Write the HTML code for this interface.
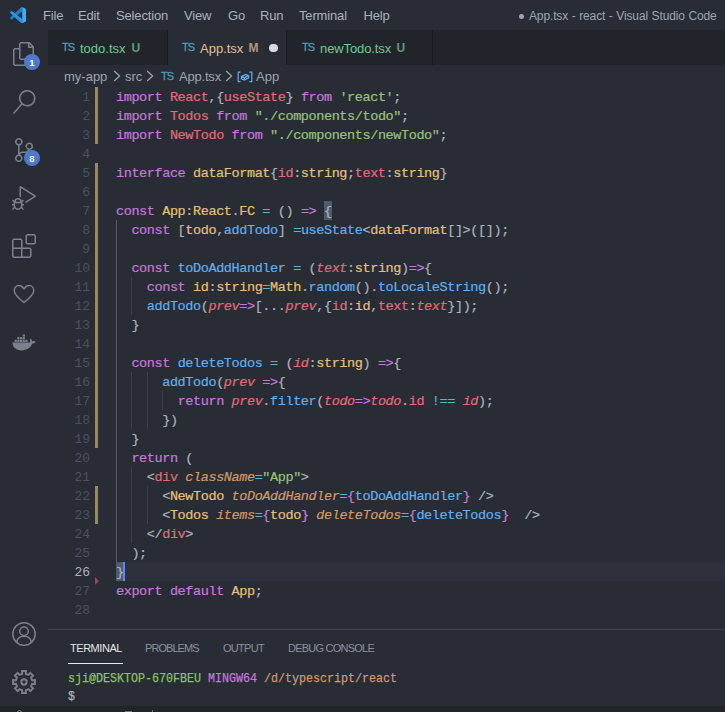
<!DOCTYPE html>
<html><head><meta charset="utf-8"><title>App.tsx - react - Visual Studio Code</title>
<style>
*{box-sizing:border-box;margin:0;padding:0}
html,body{width:725px;height:712px;overflow:hidden;background:#282c34}
body{position:relative;font-family:"Liberation Sans",sans-serif;color:#abb2bf}
.abs{position:absolute}
#title{left:0;top:0;width:725px;height:30px;background:#282c34}
.menu{position:absolute;top:1px;height:30px;line-height:30px;font-size:13px;letter-spacing:-0.15px;color:#abb2bf;white-space:nowrap}
#wtitle{position:absolute;top:1px;left:529px;height:30px;line-height:30px;font-size:12px;letter-spacing:-0.13px;word-spacing:0.4px;color:#9da5b4;white-space:nowrap}
#act{left:0;top:30px;width:48px;height:676px;background:#282c34}
.badge{position:absolute;width:16px;height:16px;border-radius:8px;background:#4d78cc;color:#fff;font-size:9.5px;font-weight:bold;line-height:17.6px;text-align:center}
#tabs{left:48px;top:30px;width:677px;height:35px;background:#21252b}
.tab{position:absolute;top:0;height:35px;background:#21252b;border-right:1px solid #181a1f;font-size:13px;line-height:35px;white-space:nowrap}
.tab.active{background:#282c34}
.ts{position:absolute;top:0px;font-size:11px;color:#519aba;letter-spacing:-1px;-webkit-text-stroke:0.3px #519aba}
.tab .nm{position:absolute;top:1px}
.tab .st{font-size:12px;font-weight:bold;opacity:.72}
#crumbs{left:48px;top:65px;width:677px;height:22px;background:#282c34;font-size:13px;line-height:22px;color:#9da5b4;white-space:nowrap}
#crumbs span{position:absolute;top:1px}
#editor{left:48px;top:87px;width:677px;height:542px;background:#282c34;overflow:hidden}
.ln{position:absolute;left:0;width:42px;padding-top:1px;text-align:right;height:19px;line-height:19px;font-family:"Liberation Mono",monospace;font-size:13px;letter-spacing:-0.1px;color:#495162}
.ln.cur{color:#abb2bf}
.cl{position:absolute;left:68px;height:19px;line-height:19px;padding-top:1px;font-family:"Liberation Mono",monospace;font-size:13.5px;letter-spacing:-0.4px;-webkit-text-stroke:0.2px currentColor;white-space:pre;color:#abb2bf}
.bm{background:#515a6b;padding:2.9px 0 1px 0}
.k{color:#c678dd}.r{color:#e06c75}.g{color:#98c379}.y{color:#e5c07b}.b{color:#61afef}.c{color:#56b6c2}.o{color:#d19a66}.i{font-style:italic}
.gm{position:absolute;left:47px;width:3px;background:#948b60}
.ig{position:absolute;width:1px;background:#3b4048}
#panel{left:48px;top:629px;width:677px;height:77px;background:#282c34;border-top:1px solid #3e4452}
.pt{position:absolute;top:9px;height:19px;line-height:19px;font-size:11px;color:#8b929e;white-space:nowrap}
.term{position:absolute;left:20px;transform:scaleX(0.8642);transform-origin:0 0;font-family:"Liberation Mono",monospace;font-size:13.5px;letter-spacing:0;-webkit-text-stroke:0.25px currentColor;line-height:17px;white-space:pre;color:#abb2bf}
#status{left:0;top:706px;width:725px;height:6px;background:#21252b}
</style></head><body>
<div id="title" class="abs">
<svg class="abs" style="left:9.5px;top:6.7px" width="16.3" height="16.4" viewBox="0 0 100 100" preserveAspectRatio="none"><path fill="#1f7fc6" d="M1.32 63.59 L16.21 50 L29.33 38.04 L68.76 2.09 C70.63 0.21 73.47 -0.27 75.86 0.88 L75.01 27.3 L45.11 50 L29.33 61.96 L12.16 74.99 C10.56 76.21 8.32 76.11 6.84 74.76 L1.33 69.75 C-0.49 68.1 -0.49 65.24 1.32 63.59Z"/><path fill="#2496e6" d="M1.33 30.25 L6.84 25.24 C8.32 23.89 10.56 23.79 12.16 25.01 L29.33 38.04 L45.11 50 L75.01 72.7 L75.86 99.12 C73.47 100.27 70.63 99.79 68.76 97.91 L29.33 61.96 L16.21 50 L1.32 36.41 C-0.49 34.76 -0.49 31.9 1.33 30.25Z"/><path fill="#3dacf8" d="M75.01 0.6 L75.86 0.88 L96.46 10.8 C98.62 11.83 100 14.02 100 16.42 V83.58 C100 85.98 98.62 88.17 96.45 89.21 L75.86 99.12 L75.01 99.4 Z"/></svg>
<span class="menu" style="left:43px">File</span>
<span class="menu" style="left:78px">Edit</span>
<span class="menu" style="left:116px">Selection</span>
<span class="menu" style="left:184px">View</span>
<span class="menu" style="left:228px">Go</span>
<span class="menu" style="left:260px">Run</span>
<span class="menu" style="left:299px">Terminal</span>
<span class="menu" style="left:363.5px">Help</span>
<span class="abs" style="left:519px;top:14px;width:5px;height:5px;border-radius:3px;background:#9da5b4"></span><span id="wtitle">App.tsx - react - Visual Studio Code</span>
</div>
<div id="act" class="abs">
<svg class="abs ic" style="left:12px;top:12px" width="24" height="24" viewBox="0 0 24 24"><path fill="#7b818c" d="M17.5 0h-9L7 1.5V6H2.5L1 7.5v15.07L2.5 24h12.07L16 22.57V18h4.7l1.3-1.43V4.5L17.5 0zm0 2.12l2.38 2.38H17.5V2.12zm-3 20.38h-12v-15H7v9.07L8.5 18h6v4.5zm6-6h-12v-15H16V6h4.5v10.5z"/></svg>
<div class="badge" style="left:24px;top:24px">1</div>
<svg class="abs ic" style="left:12px;top:60px" width="24" height="24" viewBox="0 0 24 24"><path fill="#7b818c" d="M15.25 0a8.25 8.25 0 0 0-6.18 13.72L1 22.88l1.12 1 8.05-9.12A8.251 8.251 0 1 0 15.25.01V0zm0 15a6.75 6.75 0 1 1 0-13.5 6.75 6.75 0 0 1 0 13.5z"/></svg>
<svg class="abs ic" style="left:12px;top:108px" width="24" height="24" viewBox="0 0 24 24"><path fill="#7b818c" d="M21.007 8.222A3.738 3.738 0 0 0 15.045 5.2a3.737 3.737 0 0 0 1.156 6.583 2.988 2.988 0 0 1-2.668 1.67h-2.99a4.456 4.456 0 0 0-2.989 1.165V7.4a3.737 3.737 0 1 0-1.494 0v9.117a3.776 3.776 0 1 0 1.816.099 2.99 2.99 0 0 1 2.668-1.667h2.99a4.484 4.484 0 0 0 4.223-3.039 3.736 3.736 0 0 0 3.25-3.687zM4.565 3.738a2.242 2.242 0 1 1 4.484 0 2.242 2.242 0 0 1-4.484 0zm4.484 16.441a2.242 2.242 0 1 1-4.484 0 2.242 2.242 0 0 1 4.484 0zm8.221-9.715a2.242 2.242 0 1 1 0-4.485 2.242 2.242 0 0 1 0 4.485z"/></svg>
<div class="badge" style="left:24px;top:120px">8</div>
<svg class="abs ic" style="left:12px;top:156px" width="24" height="24" viewBox="0 0 24 24"><path fill="#7b818c" d="M10.94 13.5l-1.32 1.32a3.73 3.73 0 0 0-7.24 0L1.06 13.5 0 14.56l1.72 1.72-.22.22V18H0v1.5h1.5v.08c.077.489.214.966.41 1.42L0 22.94 1.06 24l1.65-1.65A4.308 4.308 0 0 0 6 24a4.31 4.31 0 0 0 3.29-1.65L10.94 24 12 22.94 10.09 21c.198-.464.336-.951.41-1.45v-.1H12V18h-1.5v-1.5l-.22-.22L12 14.56l-1.06-1.06zM6 13.5a2.25 2.25 0 0 1 2.25 2.25h-4.5A2.25 2.25 0 0 1 6 13.5zm3 6a3.33 3.33 0 0 1-3 3 3.33 3.33 0 0 1-3-3v-2.25h6v2.25zm14.76-9.9v1.26L13.5 17.37V15.6l8.5-5.37L9 2v9.46a5.07 5.07 0 0 0-1.5-.72V.63L8.64 0l15.12 9.6z"/></svg>
<svg class="abs ic" style="left:12px;top:204px" width="24" height="24" viewBox="0 0 24 24"><path fill="#7b818c" d="M13.5 1.5L15 0h7.5L24 1.5V9l-1.5 1.5H15L13.5 9V1.5zm1.5 0V9h7.5V1.5H15zM0 15V6l1.5-1.5H9L10.5 6v7.5H18l1.5 1.5v7.5L18 24H1.5L0 22.5V15zm9-1.5V6H1.5v7.5H9zM9 15H1.5v7.5H9V15zm1.5 7.5H18V15h-7.5v7.5z"/></svg>
<svg class="abs ic" style="left:12px;top:252px" width="24" height="24" viewBox="0 0 24 24"><path fill="none" stroke="#7b818c" stroke-width="1.5" stroke-linejoin="round" d="M12 20.5 C5 15 2.2 11.8 2.2 8.4 C2.2 5.6 4.3 3.6 6.9 3.6 C9 3.6 10.9 4.9 12 7 C13.1 4.9 15 3.6 17.1 3.6 C19.7 3.6 21.8 5.6 21.8 8.4 C21.8 11.8 19 15 12 20.5Z"/></svg>
<svg class="abs ic" style="left:12px;top:301px" width="24" height="24" viewBox="0 0 24 24"><g fill="#7b818c"><path d="M0.4 11.6 H17.6 C18.2 10.6 18.3 9.3 17.9 8.2 L18.4 7.6 C19.4 8.3 20 9.3 20.1 10.3 C21.2 9.9 22.6 10 23.6 10.7 C22.9 12 21.6 12.7 20.2 12.6 C18.6 16.9 15 19.4 9.6 19.4 C4.3 19.4 0.6 16.6 0.4 11.6Z"/><rect x="2.6" y="8.8" width="2.2" height="2.2"/><rect x="5.3" y="8.8" width="2.2" height="2.2"/><rect x="8" y="8.8" width="2.2" height="2.2"/><rect x="10.7" y="8.8" width="2.2" height="2.2"/><rect x="13.4" y="8.8" width="2.2" height="2.2"/><rect x="5.3" y="6.1" width="2.2" height="2.2"/><rect x="8" y="6.1" width="2.2" height="2.2"/><rect x="10.7" y="6.1" width="2.2" height="2.2"/><rect x="10.7" y="3.4" width="2.2" height="2.2"/></g></svg>
<svg class="abs ic" style="left:12px;top:592px" width="24" height="24" viewBox="0 0 24 24"><g fill="none" stroke="#7b818c" stroke-width="1.5"><circle cx="12" cy="12" r="11.2"/><circle cx="12" cy="9.3" r="4.3"/><path d="M4.6 20.2 C5.3 16.3 8.3 14.3 12 14.3 C15.7 14.3 18.7 16.3 19.4 20.2"/></g></svg>
<svg class="abs ic" style="left:12px;top:640px" width="24" height="24" viewBox="0 0 24 24"><g fill="none" stroke="#7b818c" stroke-width="1.9" stroke-linejoin="miter"><path d="M10.19 3.90 L10.09 1.07 L13.91 1.07 L13.81 3.90 L16.45 4.99 L18.38 2.92 L21.08 5.62 L19.01 7.55 L20.10 10.19 L22.93 10.09 L22.93 13.91 L20.10 13.81 L19.01 16.45 L21.08 18.38 L18.38 21.08 L16.45 19.01 L13.81 20.10 L13.91 22.93 L10.09 22.93 L10.19 20.10 L7.55 19.01 L5.62 21.08 L2.92 18.38 L4.99 16.45 L3.90 13.81 L1.07 13.91 L1.07 10.09 L3.90 10.19 L4.99 7.55 L2.92 5.62 L5.62 2.92 L7.55 4.99Z"/><circle cx="12" cy="12" r="2.7"/></g></svg>
</div>
<div id="tabs" class="abs">
 <div class="tab" style="left:0;width:120px"><span class="ts" style="left:14px">TS</span><span class="nm" style="left:32px;color:#73c991">todo.tsx</span><span class="nm st" style="left:83.5px;color:#73c991">U</span></div>
 <div class="tab active" style="left:120px;width:119px"><span class="ts" style="left:14px">TS</span><span class="nm" style="left:32px;color:#e2c08d">App.tsx</span><span class="nm st" style="left:80.5px;color:#e2c08d">M</span><span class="abs" style="left:101.1px;top:13.8px;width:8.6px;height:8.6px;border-radius:5px;background:#d7dae0"></span></div>
 <div class="tab" style="left:239px;width:146px"><span class="ts" style="left:15px">TS</span><span class="nm" style="left:33px;color:#73c991;letter-spacing:-0.1px">newTodo.tsx</span><span class="nm st" style="left:109.5px;color:#73c991">U</span></div>
</div>
<div id="crumbs" class="abs">
 <span style="left:16px">my-app</span><svg class="abs" style="left:65px;top:5px" width="8" height="12" viewBox="0 0 8 12"><path d="M1.2 1 L6.6 6 L1.2 11" fill="none" stroke="#9da5b4" stroke-width="1.2"/></svg><span style="left:77px">src</span><svg class="abs" style="left:98px;top:5px" width="8" height="12" viewBox="0 0 8 12"><path d="M1.2 1 L6.6 6 L1.2 11" fill="none" stroke="#9da5b4" stroke-width="1.2"/></svg><span class="ts" style="left:113px;top:0px">TS</span><span style="left:131px;letter-spacing:-0.2px">App.tsx</span><svg class="abs" style="left:177px;top:5px" width="8" height="12" viewBox="0 0 8 12"><path d="M1.2 1 L6.6 6 L1.2 11" fill="none" stroke="#9da5b4" stroke-width="1.2"/></svg>
 <svg class="abs" style="left:189px;top:6px" width="16" height="12" viewBox="0 0 16 12"><g fill="none" stroke="#61afef" stroke-width="1.2"><path d="M3.6 1.2 H1.2 V10.6 H3.6"/><path d="M12.4 1.2 H14.8 V10.6 H12.4"/><path d="M4.4 5.6 L8.6 3.4 L11.6 4.6 L11.6 6.8 L7.4 9 L4.4 7.8 Z M4.4 5.6 L7.4 6.8 L11.6 4.6 M7.4 6.8 V9"/></g></svg>
 <span style="left:208px">App</span>
</div>
<div id="editor" class="abs">
<div class="abs" style="left:68px;top:475px;width:609px;height:19px;background:#2c313c"></div>
<div class="gm" style="top:0px;height:57px"></div>
<div class="gm" style="top:76px;height:285px"></div>
<div class="gm" style="top:399px;height:38px"></div>
<div class="abs" style="left:47px;top:490px;width:0;height:0;border-top:4px solid transparent;border-bottom:4px solid transparent;border-left:4.4px solid #a83e48"></div>
<div class="ig" style="left:68.0px;top:133px;height:342px;background:#535a69"></div>
<div class="ig" style="left:83.4px;top:190px;height:38px;background:#3b4048"></div>
<div class="ig" style="left:83.4px;top:285px;height:57px;background:#3b4048"></div>
<div class="ig" style="left:83.4px;top:380px;height:76px;background:#3b4048"></div>
<div class="ig" style="left:98.8px;top:285px;height:57px;background:#3b4048"></div>
<div class="ig" style="left:98.8px;top:399px;height:38px;background:#3b4048"></div>
<div class="ig" style="left:114.2px;top:304px;height:19px;background:#3b4048"></div>
<div class="ln" style="top:0px">1</div>
<div class="cl" style="top:0px"><span class="k">import</span> <span class="r">React</span>,{<span class="r">useState</span>} <span class="k">from</span> <span class="g">'react'</span>;</div>
<div class="ln" style="top:19px">2</div>
<div class="cl" style="top:19px"><span class="k">import</span> <span class="r">Todos</span> <span class="k">from</span> <span class="g">"./components/todo"</span>;</div>
<div class="ln" style="top:38px">3</div>
<div class="cl" style="top:38px"><span class="k">import</span> <span class="r">NewTodo</span> <span class="k">from</span> <span class="g">"./components/newTodo"</span>;</div>
<div class="ln" style="top:57px">4</div>
<div class="ln" style="top:76px">5</div>
<div class="cl" style="top:76px"><span class="k">interface</span> <span class="y">dataFormat</span>{<span class="r">id</span>:<span class="y">string</span>;<span class="r">text</span>:<span class="y">string</span>}</div>
<div class="ln" style="top:95px">6</div>
<div class="ln" style="top:114px">7</div>
<div class="cl" style="top:114px"><span class="k">const</span> <span class="y">App</span>:<span class="y">React</span>.<span class="y">FC</span> <span class="c">=</span> () <span class="k">=&gt;</span> <span class="bm">{</span></div>
<div class="ln" style="top:133px">8</div>
<div class="cl" style="top:133px">  <span class="k">const</span> [<span class="y">todo</span>,<span class="b">addTodo</span>] <span class="c">=</span><span class="b">useState</span>&lt;<span class="y">dataFormat</span>[]&gt;([]);</div>
<div class="ln" style="top:152px">9</div>
<div class="ln" style="top:171px">10</div>
<div class="cl" style="top:171px">  <span class="k">const</span> <span class="b">toDoAddHandler</span> <span class="c">=</span> (<span class="r i">text</span>:<span class="y">string</span>)<span class="k">=&gt;</span>{</div>
<div class="ln" style="top:190px">11</div>
<div class="cl" style="top:190px">    <span class="k">const</span> <span class="y">id</span>:<span class="y">string</span><span class="c">=</span><span class="y">Math</span>.<span class="b">random</span>().<span class="b">toLocaleString</span>();</div>
<div class="ln" style="top:209px">12</div>
<div class="cl" style="top:209px">    <span class="b">addTodo</span>(<span class="r i">prev</span><span class="k">=&gt;</span>[...<span class="r i">prev</span>,{<span class="r">id</span>:<span class="y">id</span>,<span class="r">text</span>:<span class="r i">text</span>}]);</div>
<div class="ln" style="top:228px">13</div>
<div class="cl" style="top:228px">  }</div>
<div class="ln" style="top:247px">14</div>
<div class="ln" style="top:266px">15</div>
<div class="cl" style="top:266px">  <span class="k">const</span> <span class="b">deleteTodos</span> <span class="c">=</span> (<span class="r i">id</span>:<span class="y">string</span>) <span class="k">=&gt;</span>{</div>
<div class="ln" style="top:285px">16</div>
<div class="cl" style="top:285px">      <span class="b">addTodo</span>(<span class="r i">prev</span> <span class="k">=&gt;</span>{</div>
<div class="ln" style="top:304px">17</div>
<div class="cl" style="top:304px">        <span class="k">return</span> <span class="r i">prev</span>.<span class="b">filter</span>(<span class="r i">todo</span><span class="k">=&gt;</span><span class="r i">todo</span>.<span class="r">id</span> <span class="c">!==</span> <span class="r i">id</span>);</div>
<div class="ln" style="top:323px">18</div>
<div class="cl" style="top:323px">      })</div>
<div class="ln" style="top:342px">19</div>
<div class="cl" style="top:342px">  }</div>
<div class="ln" style="top:361px">20</div>
<div class="cl" style="top:361px">  <span class="k">return</span> (</div>
<div class="ln" style="top:380px">21</div>
<div class="cl" style="top:380px">    &lt;<span class="r">div</span> <span class="o i">className</span><span class="c">=</span><span class="g">"App"</span>&gt;</div>
<div class="ln" style="top:399px">22</div>
<div class="cl" style="top:399px">      &lt;<span class="y">NewTodo</span> <span class="o i">toDoAddHandler</span><span class="c">=</span><span class="k">{</span><span class="b">toDoAddHandler</span><span class="k">}</span> /&gt;</div>
<div class="ln" style="top:418px">23</div>
<div class="cl" style="top:418px">      &lt;<span class="y">Todos</span> <span class="o i">items</span><span class="c">=</span><span class="k">{</span><span class="y">todo</span><span class="k">}</span> <span class="o i">deleteTodos</span><span class="c">=</span><span class="k">{</span><span class="b">deleteTodos</span><span class="k">}</span>  /&gt;</div>
<div class="ln" style="top:437px">24</div>
<div class="cl" style="top:437px">    &lt;/<span class="r">div</span>&gt;</div>
<div class="ln" style="top:456px">25</div>
<div class="cl" style="top:456px">  );</div>
<div class="ln cur" style="top:475px">26</div>
<div class="cl" style="top:475px"><span class="bm">}</span></div>
<div class="ln" style="top:494px">27</div>
<div class="cl" style="top:494px"><span class="k">export</span> <span class="k">default</span> <span class="y">App</span>;</div>
<div class="ln" style="top:513px">28</div>
<div class="abs" style="left:75.0px;top:475px;width:2px;height:19px;background:#528bff"></div>
</div>
<div id="panel" class="abs">
 <span class="pt" style="left:22px;color:#e6e6e6;letter-spacing:-0.46px">TERMINAL</span>
 <span class="abs" style="left:20px;top:33px;width:55px;height:1px;background:#e6e6e6"></span>
 <span class="pt" style="left:97px;letter-spacing:-0.94px">PROBLEMS</span>
 <span class="pt" style="left:175px;letter-spacing:-0.7px">OUTPUT</span>
 <span class="pt" style="left:240px;letter-spacing:-0.77px">DEBUG CONSOLE</span>
 <div class="term" style="top:40px"><span style="color:#8cc265">sji@DESKTOP-670FBEU</span> <span class="k">MINGW64</span> <span class="o">/d/typescript/react</span></div>
 <div class="term" style="top:58px">$</div>
</div>
<div id="status" class="abs"><span class="abs" style="left:17px;top:4px;width:5px;height:5px;border:1.2px solid #7d8491;border-radius:3px"></span><span class="abs" style="left:125px;top:4.5px;width:7px;height:2px;background:#6d7480"></span><span class="abs" style="left:152px;top:3.5px;width:1.3px;height:3px;background:#6d7480"></span></div>
</body></html>
